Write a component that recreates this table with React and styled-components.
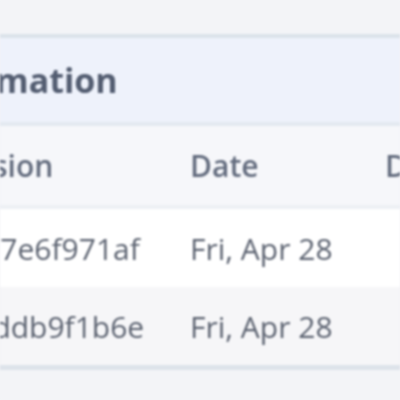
import React from "react";
import styled, { createGlobalStyle } from "styled-components";

const Global = createGlobalStyle`
  html, body { margin: 0; padding: 0; background: #f3f4f7; }
  body { font-family: "Open Sans", "Noto Sans", sans-serif; }
`;

const Page = styled.div`
  width: 400px;
  height: 400px;
  overflow: hidden;
  background: #f3f4f7;
  padding-top: 34px;
  box-sizing: border-box;
  filter: blur(0.9px);
`;

const Card = styled.div`
  margin-left: -100px;
  width: 620px;
  border-top: 4px solid #dbe3ea;
  border-bottom: 5px solid #dde3ea;
  background: #ffffff;
`;

const Title = styled.div`
  height: 84px;
  display: flex;
  align-items: center;
  padding-left: 12px;
  background: #eef2fb;
  border-bottom: 4px solid #e3e9f0;
  font-size: 34px;
  font-weight: 700;
  color: #535d71;
  white-space: nowrap;
`;

const Row = styled.div`
  display: grid;
  grid-template-columns: 290px 195px 1fr;
  height: ${(p) => p.$h}px;
  align-items: center;
  background: ${(p) => p.$bg};
  border-bottom: ${(p) => (p.$border ? "4px solid #edf0f4" : "none")};
  white-space: nowrap;
`;

const HeadCell = styled.div`
  font-size: 30px;
  font-weight: 600;
  color: #636c7e;
  padding-left: ${(p) => p.$pl || 0}px;
`;

const Cell = styled.div`
  font-size: 30px;
  font-weight: 400;
  color: #5c6371;
  padding-left: ${(p) => p.$pl || 0}px;
`;

const rows = [
  { hash: "e0d7e6f971af", date: "Fri, Apr 28", bg: "#ffffff" },
  { hash: "5f0ddb9f1b6e", date: "Fri, Apr 28", bg: "#f6f6f8" },
];

export default function App() {
  return (
    <>
      <Global />
      <Page>
        <Card>
          <Title>Information</Title>
          <Row $h={79} $bg="#f6f7fa" $border>
            <HeadCell $pl={44}>Version</HeadCell>
            <HeadCell>Date</HeadCell>
            <HeadCell>Deployed</HeadCell>
          </Row>
          {rows.map((r) => (
            <Row key={r.hash} $h={78} $bg={r.bg}>
              <Cell $pl={48}>{r.hash}</Cell>
              <Cell>{r.date}</Cell>
              <Cell></Cell>
            </Row>
          ))}
        </Card>
      </Page>
    </>
  );
}
